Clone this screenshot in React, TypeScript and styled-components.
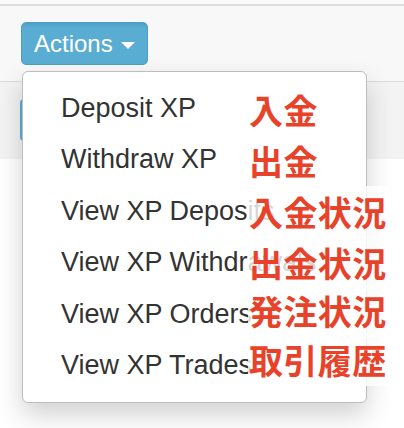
import React from "react";
import styled, { createGlobalStyle } from "styled-components";

const Global = createGlobalStyle`
  html, body { margin: 0; padding: 0; background: #ffffff; }
  body { font-family: "Liberation Sans", Arial, sans-serif; }
  #root { width: 404px; height: 428px; overflow: hidden; }
`;

const Page = styled.div`
  width: 404px;
  height: 428px;
  display: flex;
  flex-direction: column;
  background: #ffffff;
`;

const TopStrip = styled.div`
  height: 4px;
  background: #fafafa;
  border-bottom: 2px solid #dedede;
  flex: none;
`;

const Header = styled.div`
  height: 76px;
  box-sizing: border-box;
  padding: 16px 0 0 21px;
  background: #f8f8f8;
  border-bottom: 1px solid #dcdcdc;
  flex: none;
  position: relative;
  z-index: 2;
`;

const Toolbar = styled.div`
  height: 77px;
  box-sizing: border-box;
  padding: 17px 0 0 20px;
  background: #f3f3f3;
  flex: none;
`;

const Dropdown = styled.div`
  position: relative;
  display: inline-block;
`;

const ActionButton = styled.button`
  display: flex;
  align-items: center;
  height: 43px;
  box-sizing: border-box;
  padding: 0 12px 0 12px;
  border: 1px solid #4d9ec4;
  border-radius: 5px;
  background: linear-gradient(#4f9fc6 0px, #5aadd2 5px, #5aadd2 100%);
  color: #ffffff;
  font-family: "Liberation Sans", Arial, sans-serif;
  font-size: 24px;
  line-height: 1.4;
  cursor: pointer;
`;

const Caret = styled.span`
  display: inline-block;
  width: 0;
  height: 0;
  margin: 4px 0 0 8px;
  border-top: 7px solid #ffffff;
  border-left: 7px solid transparent;
  border-right: 7px solid transparent;
`;

const HiddenButton = styled.div`
  width: 110px;
  height: 42px;
  border-radius: 4px;
  background: #5ab0d6;
`;

const Menu = styled.ul`
  position: absolute;
  left: 1px;
  top: calc(100% + 6px);
  width: 345px;
  box-sizing: border-box;
  margin: 0;
  padding: 11px 0 10.6px 0;
  list-style: none;
  background: #ffffff;
  border: 1px solid #bdbdbd;
  border-radius: 6px;
  box-shadow: 0 12px 26px rgba(0, 0, 0, 0.18);
`;

const Item = styled.li`
  position: relative;
  height: 51.4px;
  padding-left: 38px;
  font-family: "Liberation Sans", Arial, sans-serif;
  font-size: 27px;
  line-height: 51.4px;
  color: #333333;
  white-space: nowrap;
`;

const Note = styled.span<{ $shift: number }>`
  position: absolute;
  left: 225px;
  top: ${(p) => `calc(50% - 26px + ${p.$shift}px)`};
  height: 52px;
  display: flex;
  align-items: center;
  padding: 0 3px 0 1px;
  background: rgba(255, 255, 255, 0.8);
  color: #e8432a;
  font-family: "Noto Sans CJK JP", "Noto Sans", sans-serif;
  font-weight: 700;
  font-size: 34px;
  line-height: 40px;
  letter-spacing: 0.4px;
`;

const items = [
  { en: "Deposit XP", ja: "入金", shift: 1 },
  { en: "Withdraw XP", ja: "出金", shift: 1 },
  { en: "View XP Deposits", ja: "入金状況", shift: 0.5 },
  { en: "View XP Withdrawals", ja: "出金状況", shift: 0 },
  { en: "View XP Orders", ja: "発注状況", shift: -3 },
  { en: "View XP Trades", ja: "取引履歴", shift: -6 },
];

export default function App() {
  return (
    <>
      <Global />
      <Page>
        <TopStrip />
        <Header>
          <Dropdown>
            <ActionButton>
              Actions
              <Caret />
            </ActionButton>
            <Menu>
              {items.map((it) => (
                <Item key={it.en}>
                  {it.en}
                  <Note $shift={it.shift}>{it.ja}</Note>
                </Item>
              ))}
            </Menu>
          </Dropdown>
        </Header>
        <Toolbar>
          <HiddenButton />
        </Toolbar>
      </Page>
    </>
  );
}
